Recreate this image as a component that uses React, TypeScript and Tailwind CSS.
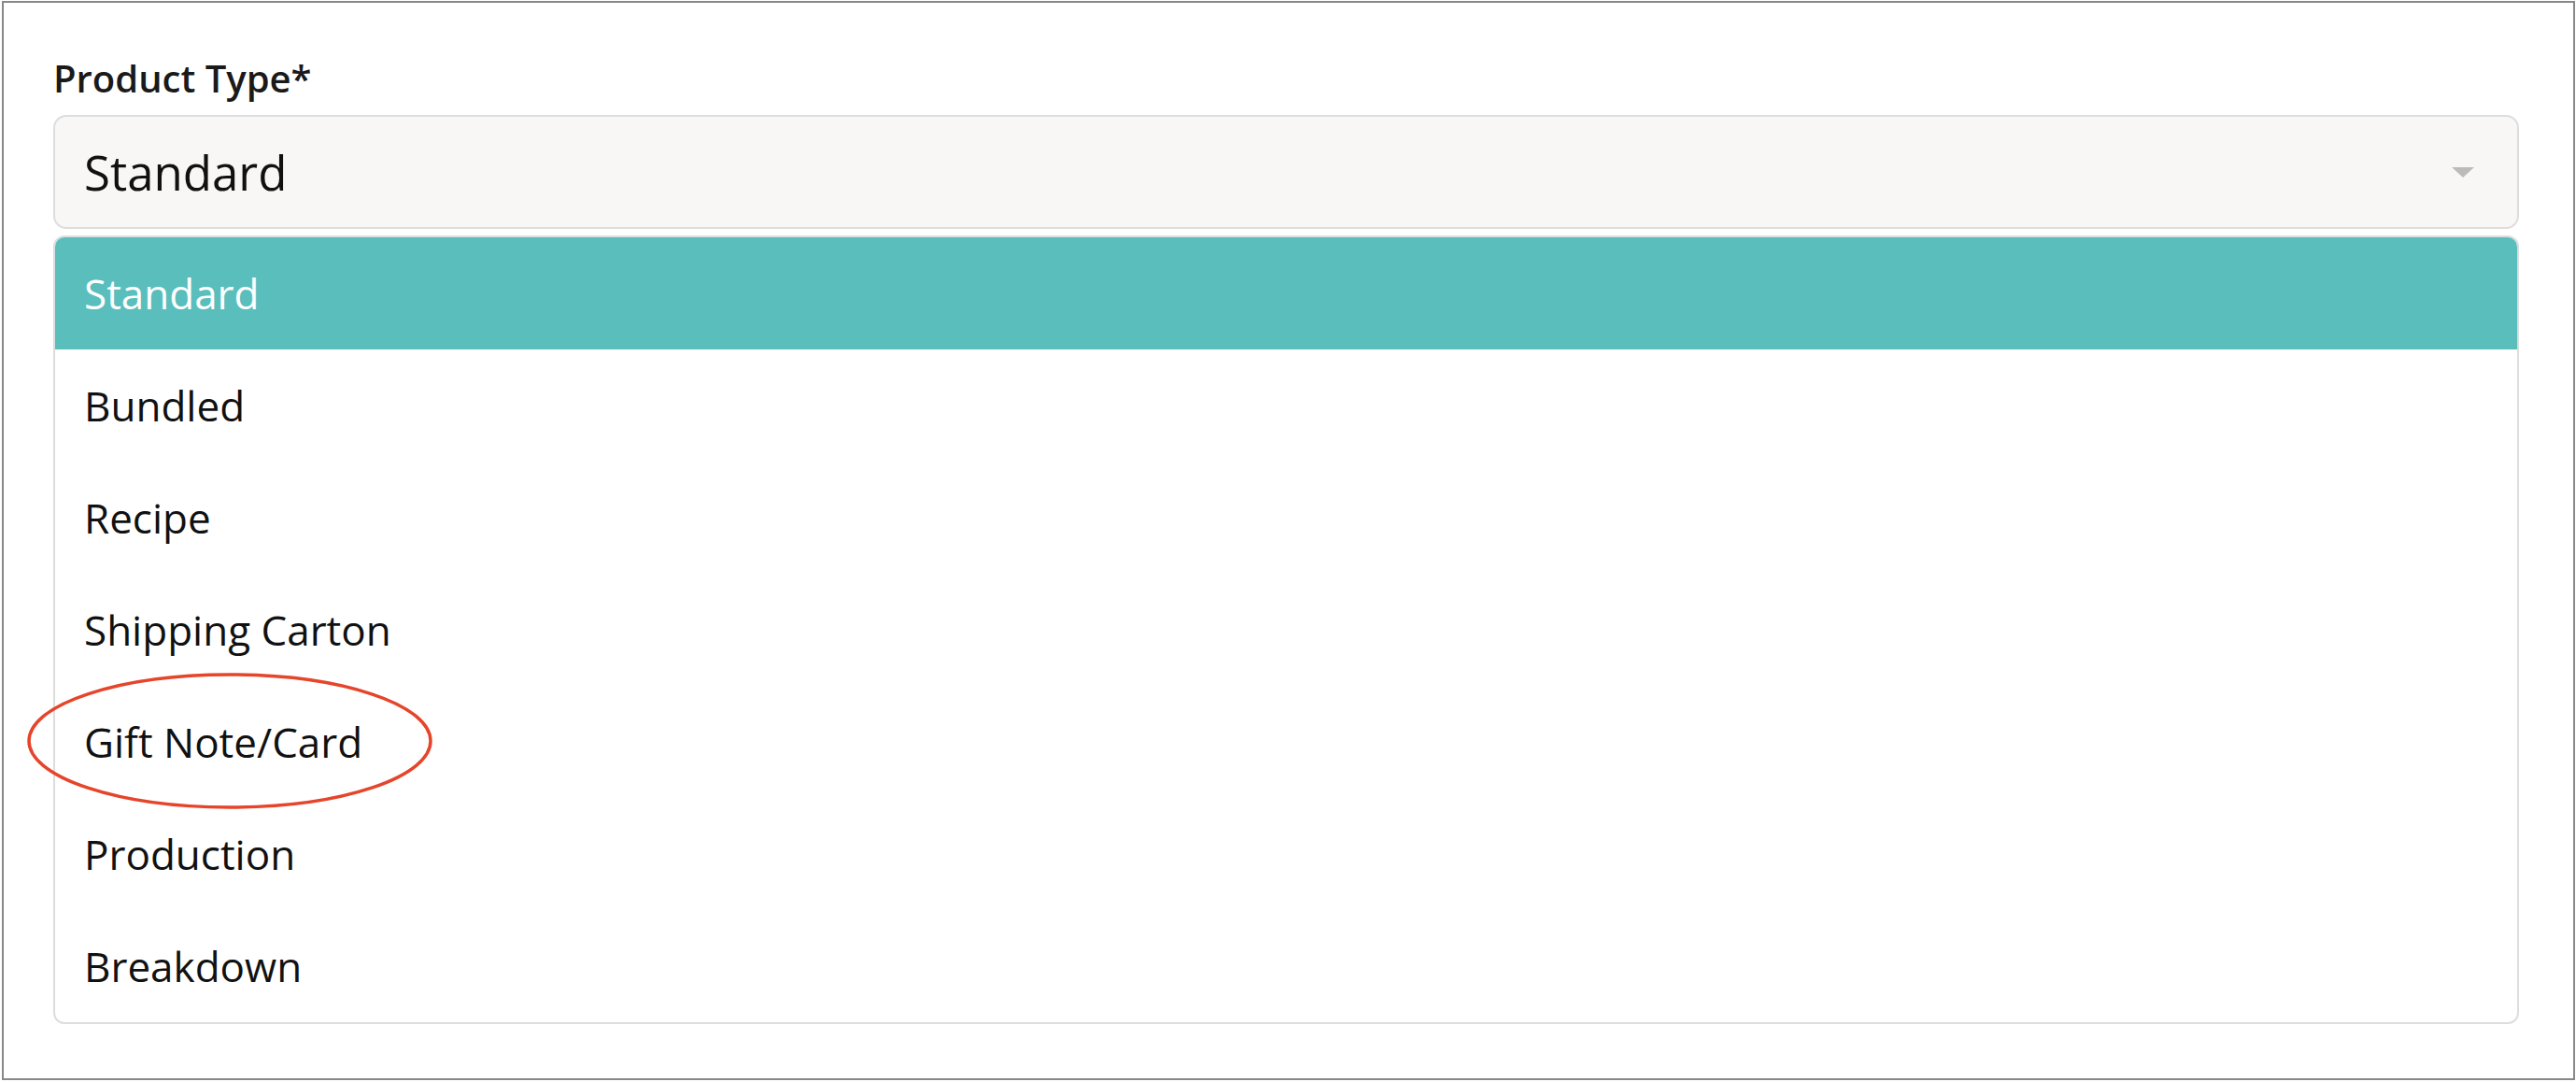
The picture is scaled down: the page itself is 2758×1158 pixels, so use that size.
const options = [
  "Standard",
  "Bundled",
  "Recipe",
  "Shipping Carton",
  "Gift Note/Card",
  "Production",
  "Breakdown",
];

export default function App() {
  const selected = "Standard";

  return (
    <div
      className="relative w-[2758px] h-[1158px] bg-white pl-[2px] pt-[1px]"
      style={{ fontFamily: '"Open Sans", "Noto Sans", sans-serif' }}
    >
      <div className="w-[2755px] h-[1155px] border-2 border-[#888888] bg-white pt-[61px] pl-[53px] pr-[58px]">
        {/* Label */}
        <label className="block text-[40px] leading-none font-semibold text-[#1a1a1a] mb-[19px]">
          Product Type*
        </label>

        {/* Select */}
        <div className="flex items-center justify-between h-[122px] rounded-[14px] border-2 border-[#dddddd] bg-[#f8f7f5] pl-[31px] pr-[46px]">
          <span className="text-[51px] leading-none text-[#111111]">{selected}</span>
          <svg width="24" height="11" viewBox="0 0 24 11">
            <polygon points="0,0 24,0 12,11" fill="#bbbbbb" />
          </svg>
        </div>

        {/* Options list */}
        <div className="mt-[7px] rounded-[12px] border-2 border-[#dddddd] bg-white overflow-hidden">
          {options.map((o) => (
            <div
              key={o}
              className={
                o === selected
                  ? "flex items-center h-[120px] pl-[31px] bg-[#5abebd] text-white text-[44px] leading-none"
                  : "flex items-center h-[120px] pl-[31px] text-[#111111] text-[44px] leading-none"
              }
            >
              {o}
            </div>
          ))}
        </div>
      </div>

      {/* Annotation ellipse */}
      <svg
        className="absolute left-[27px] top-[718px]"
        width="438"
        height="150"
        viewBox="0 0 438 150"
      >
        <ellipse cx="219" cy="75" rx="215" ry="71" fill="none" stroke="#e5452b" strokeWidth="3.5" />
      </svg>
    </div>
  );
}
